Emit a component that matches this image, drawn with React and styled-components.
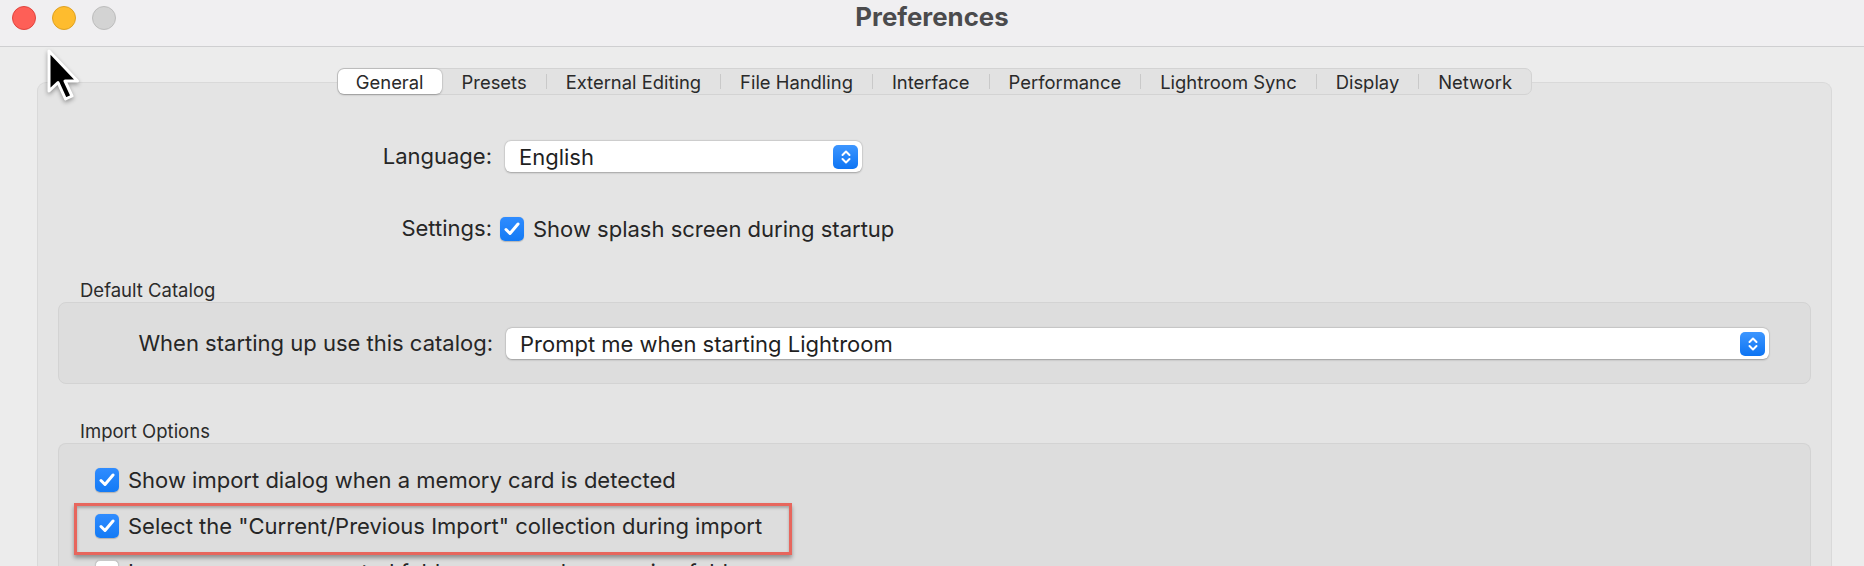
import React from "react";
import styled, { createGlobalStyle } from "styled-components";

const GlobalStyle = createGlobalStyle`
	html, body {
		margin: 0;
		padding: 0;
		background: #ececec;
	}
	body {
		font-family: Inter, "Liberation Sans", Arial, sans-serif;
		color: #262626;
		-webkit-font-smoothing: antialiased;
	}
`;

const TABS = [
	"General",
	"Presets",
	"External Editing",
	"File Handling",
	"Interface",
	"Performance",
	"Lightroom Sync",
	"Display",
	"Network",
];

const Window = styled.div`
	position: relative;
	width: 1864px;
	height: 566px;
	overflow: hidden;
	display: flex;
	flex-direction: column;
	background: #ececec;
`;

const TitleBar = styled.div`
	height: 46px;
	flex-shrink: 0;
	display: grid;
	grid-template-columns: 1fr auto 1fr;
	align-items: start;
	background: #f0eff1;
	border-bottom: 1px solid #cfcfd1;
`;

const Lights = styled.div`
	display: flex;
	gap: 16px;
	padding: 6px 0 0 12px;
`;

const Light = styled.span`
	width: 22px;
	height: 22px;
	border-radius: 50%;
	background: ${(p) => p.color};
	border: 1px solid ${(p) => p.edge};
`;

const Title = styled.div`
	font-weight: 700;
	font-size: 25.8px;
	line-height: 34px;
	color: #4b4b4d;
`;

const Cursor = styled.svg`
	position: absolute;
	left: 46px;
	top: 48px;
	filter: drop-shadow(0 2px 2px rgba(0, 0, 0, 0.35));
`;

const Content = styled.div`
	flex: 1;
	display: flex;
	flex-direction: column;
	align-items: center;
	padding: 21px 32px 0 37px;
`;

const TabBar = styled.div`
	position: relative;
	z-index: 1;
	display: flex;
	align-items: center;
	box-sizing: border-box;
	height: 27px;
	margin-bottom: -13px;
	background: #e2e2e2;
	border: 1px solid #d3d3d3;
	border-radius: 7px;
`;

const Tab = styled.div`
	height: 25px;
	display: flex;
	align-items: center;
	padding: 0 ${(p) => (p.$active ? "18px" : "19px")};
	font-size: 18.4px;
	color: #2a2a2a;
	border-radius: 6px;
	background: ${(p) => (p.$active ? "#ffffff" : "transparent")};
	box-shadow: ${(p) =>
		p.$active ? "0 0.5px 2px rgba(0,0,0,0.25), 0 0 0 0.5px rgba(0,0,0,0.08)" : "none"};
`;

const TabSep = styled.span`
	width: 1px;
	height: 15px;
	background: ${(p) => (p.$hidden ? "transparent" : "#c9c9c9")};
`;

const Panel = styled.div`
	align-self: stretch;
	flex: 1;
	background: #e4e4e4;
	border: 1px solid #d9d9d9;
	border-bottom: none;
	border-radius: 9px 9px 0 0;
	padding: 58px 20px 0 20px;
`;

const FieldRow = styled.div`
	display: grid;
	grid-template-columns: 434px 1fr;
	column-gap: ${(p) => p.$gap || 13}px;
	align-items: center;
	margin-bottom: ${(p) => p.$after || 0}px;
	padding-right: ${(p) => p.$right || 0}px;
`;

const Label = styled.div`
	text-align: right;
	font-size: 22px;
	line-height: 31px;
	white-space: nowrap;
`;

const Popup = styled.div`
	display: flex;
	align-items: center;
	justify-content: space-between;
	height: 31px;
	width: ${(p) => (p.$width ? `${p.$width}px` : "auto")};
	box-sizing: border-box;
	padding: 0 4px 0 14px;
	background: #ffffff;
	border-radius: 6px;
	box-shadow: 0 0.5px 2px rgba(0, 0, 0, 0.28), 0 0 0 0.5px rgba(0, 0, 0, 0.06);
	font-size: 22px;
	color: #1f1f1f;
`;

const Stepper = styled.span`
	width: 25px;
	height: 24px;
	border-radius: 5px;
	background: linear-gradient(#3d96ff, #0d74f3);
	display: flex;
	align-items: center;
	justify-content: center;
`;

const CheckRow = styled.div`
	display: flex;
	align-items: center;
	gap: 9px;
	font-size: 22px;
	white-space: nowrap;
`;

const Box = styled.span`
	flex-shrink: 0;
	width: 24px;
	height: 24px;
	box-sizing: border-box;
	border-radius: 5px;
	display: flex;
	align-items: center;
	justify-content: center;
	background: ${(p) => (p.$checked ? "linear-gradient(#2f8cff, #137af5)" : "#ffffff")};
	border: ${(p) => (p.$checked ? "none" : "1px solid #c8c8c8")};
	box-shadow: 0 0.5px 1px rgba(0, 0, 0, 0.2);
`;

const GroupLabel = styled.div`
	font-size: 18.5px;
	line-height: 24px;
	padding-left: 22px;
	margin-top: ${(p) => p.$top}px;
	color: #2b2b2b;
`;

const GroupBox = styled.div`
	background: #dddddd;
	border: 1px solid #d3d3d3;
	border-radius: 8px;
	padding: ${(p) => p.$pad};
	${(p) => p.$open && "border-bottom: none; border-radius: 8px 8px 0 0;"}
`;

const ImportRow = styled.div`
	position: relative;
	height: 46px;
	display: flex;
	align-items: center;
`;

const Highlight = styled.div`
	position: absolute;
	left: -21px;
	top: 0;
	width: 718px;
	height: 52px;
	box-sizing: border-box;
	border: 3px solid #e7665d;
	box-shadow: 0 3px 4px rgba(0, 0, 0, 0.35), inset 0 2px 3px rgba(0, 0, 0, 0.25);
	pointer-events: none;
`;

const Check = () => (
	<svg width="16" height="14" viewBox="0 0 16 14">
		<path
			d="M2 7.5 L6 11.5 L14 2"
			fill="none"
			stroke="#fff"
			strokeWidth="3"
			strokeLinecap="round"
			strokeLinejoin="round"
		/>
	</svg>
);

const Chevrons = () => (
	<svg width="12" height="16" viewBox="0 0 12 16">
		<path
			d="M2.5 6 L6 2.5 L9.5 6 M2.5 10 L6 13.5 L9.5 10"
			fill="none"
			stroke="#fff"
			strokeWidth="2"
			strokeLinecap="round"
			strokeLinejoin="round"
		/>
	</svg>
);

const Checkbox = ({ checked }) => <Box $checked={checked}>{checked && <Check />}</Box>;

const App = () => {
	const active = 0;
	return (
		<Window>
			<GlobalStyle />
			<TitleBar>
				<Lights>
					<Light color="#fe5f57" edge="#e0443e" />
					<Light color="#febc2e" edge="#dea123" />
					<Light color="#d3d3d3" edge="#bdbdbd" />
				</Lights>
				<Title>Preferences</Title>
				<div />
			</TitleBar>

			<Content>
				<TabBar>
					{TABS.map((t, i) => (
						<React.Fragment key={t}>
							{i > 0 && <TabSep $hidden={i === active || i - 1 === active} />}
							<Tab $active={i === active}>{t}</Tab>
						</React.Fragment>
					))}
				</TabBar>

				<Panel>
					<FieldRow $after={41}>
						<Label>Language:</Label>
						<Popup $width={357}>
							English
							<Stepper>
								<Chevrons />
							</Stepper>
						</Popup>
					</FieldRow>

					<FieldRow $gap={8}>
						<Label>Settings:</Label>
						<CheckRow>
							<Checkbox checked />
							Show splash screen during startup
						</CheckRow>
					</FieldRow>

					<GroupLabel $top={34}>Default Catalog</GroupLabel>
					<GroupBox $pad="25px 0 24px 0">
						<FieldRow $right={41}>
							<Label>When starting up use this catalog:</Label>
							<Popup>
								Prompt me when starting Lightroom
								<Stepper>
									<Chevrons />
								</Stepper>
							</Popup>
						</FieldRow>
					</GroupBox>

					<GroupLabel $top={35}>Import Options</GroupLabel>
					<GroupBox $pad="13px 0 0 36px" $open>
						<ImportRow>
							<CheckRow>
								<Checkbox checked />
								Show import dialog when a memory card is detected
							</CheckRow>
						</ImportRow>
						<ImportRow>
							<CheckRow>
								<Checkbox checked />
								Select the "Current/Previous Import" collection during import
							</CheckRow>
							<Highlight />
						</ImportRow>
						<ImportRow>
							<CheckRow>
								<Checkbox />
								Ignore camera-generated folder names when naming folders
							</CheckRow>
						</ImportRow>
					</GroupBox>
				</Panel>
			</Content>

			<Cursor width="36" height="58" viewBox="-3 -3 36 58">
				<path
					d="M0 0 L0 40 L9 31.5 L16.5 48 L23 45 L16 30 L28.5 30 Z"
					fill="#000"
					stroke="#fff"
					strokeWidth="3"
					strokeLinejoin="round"
				/>
			</Cursor>
		</Window>
	);
};

export default App;
